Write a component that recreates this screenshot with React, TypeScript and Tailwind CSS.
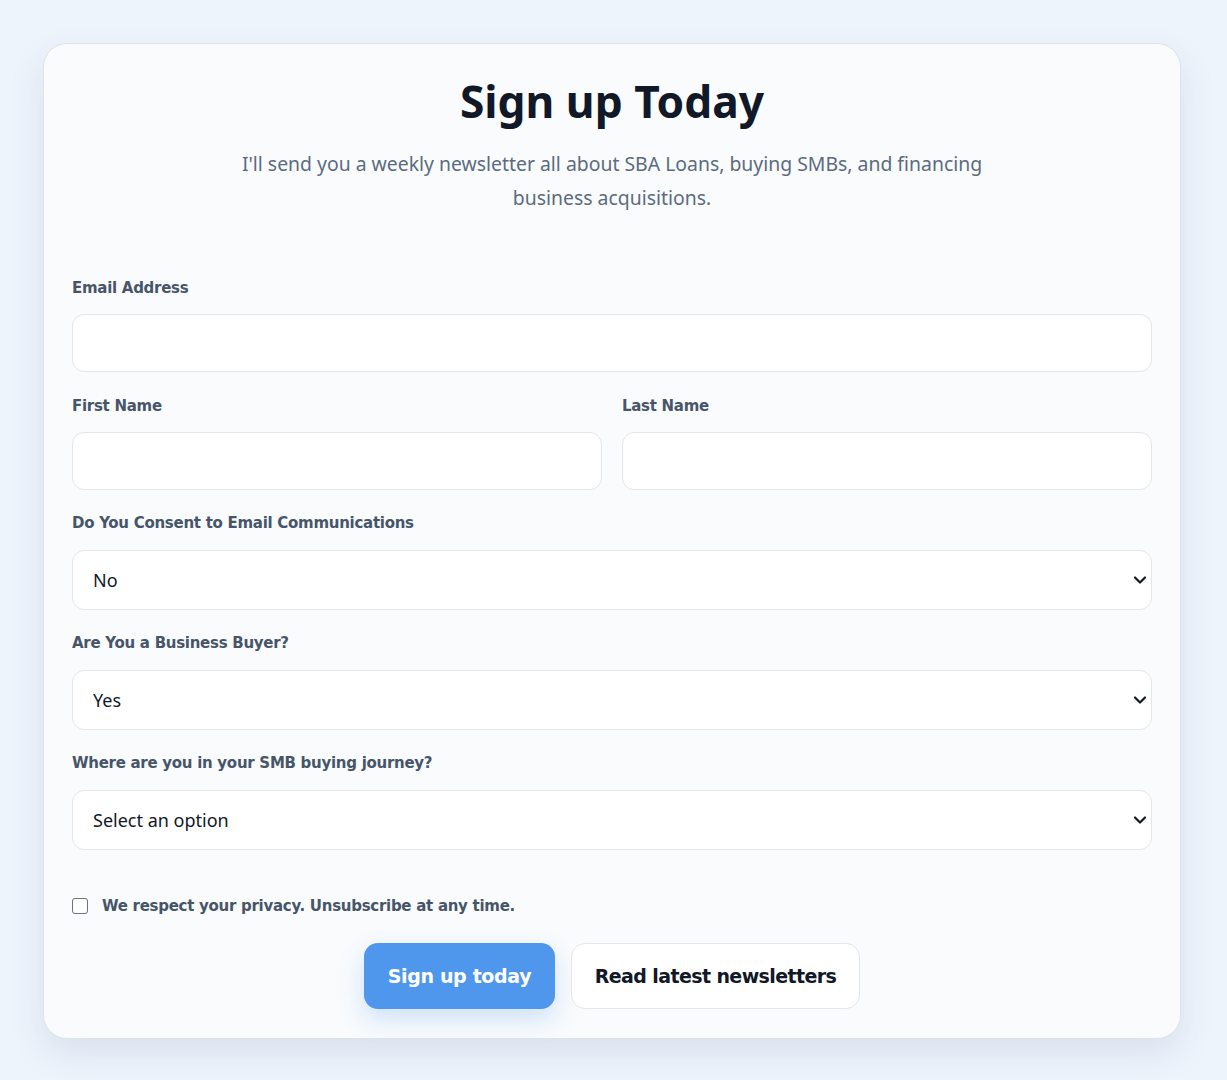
import { ChevronDown } from "lucide-react";

const label = "block text-[15px] leading-[24px] font-bold tracking-[-0.28px] text-[#475569]";
const labelFont = { fontFamily: '"DejaVu Sans", Verdana, sans-serif' };
const field =
  "w-full rounded-[12px] border border-[#e3e6ea] bg-white px-5 text-[18px] text-[#111827] outline-none";

function Select({ value, options }: { value: string; options: string[] }) {
  return (
    <div className="relative">
      <select
        defaultValue={value}
        className={`${field} h-[60px] appearance-none`}
        style={{ fontFamily: '"Noto Sans", sans-serif' }}
      >
        {options.map((o) => (
          <option key={o}>{o}</option>
        ))}
      </select>
      <ChevronDown
        className="pointer-events-none absolute right-[2px] top-1/2 h-[20px] w-[20px] -translate-y-1/2 text-[#111827]"
        strokeWidth={2.6}
      />
    </div>
  );
}

export default function App() {
  return (
    <div className="min-h-screen bg-[#eef4fc] pl-[43px] pt-[43px] pb-[41px]">
      <div
        className="w-[1138px] rounded-[24px] border border-[#dde3ea] bg-[#f9fbfd] px-[28px] pt-[29px] pb-[29px] shadow-[0_14px_36px_rgba(30,60,110,0.10)]"
        style={{ fontFamily: '"Noto Sans", sans-serif' }}
      >
        <h1 className="text-center text-[44.3px] font-bold leading-[56px] text-[#111827]">
          Sign up Today
        </h1>
        <p className="mx-auto mt-[18px] max-w-[770px] text-center text-[19.4px] leading-[34px] text-[#5c6b80]">
          I'll send you a weekly newsletter all about SBA Loans, buying SMBs, and financing
          business acquisitions.
        </p>

        <form className="mt-[61px]">
          <label className={label} style={labelFont}>
            Email Address
          </label>
          <input type="email" className={`${field} mt-[14px] h-[58px]`} />

          <div className="mt-[22px] grid grid-cols-2 gap-[20px]">
            <div>
              <label className={label} style={labelFont}>
                First Name
              </label>
              <input className={`${field} mt-[14px] h-[58px]`} />
            </div>
            <div>
              <label className={label} style={labelFont}>
                Last Name
              </label>
              <input className={`${field} mt-[14px] h-[58px]`} />
            </div>
          </div>

          <div className="mt-[21px]">
            <label className={`${label} mb-[15px]`} style={labelFont}>
              Do You Consent to Email Communications
            </label>
            <Select value="No" options={["No", "Yes"]} />
          </div>

          <div className="mt-[21px]">
            <label className={`${label} mb-[15px]`} style={labelFont}>
              Are You a Business Buyer?
            </label>
            <Select value="Yes" options={["Yes", "No"]} />
          </div>

          <div className="mt-[21px]">
            <label className={`${label} mb-[15px]`} style={labelFont}>
              Where are you in your SMB buying journey?
            </label>
            <Select
              value="Select an option"
              options={["Select an option", "Just exploring", "Actively searching", "Under LOI"]}
            />
          </div>

          <label className="mt-[44px] flex items-center gap-[14px]">
            <input
              type="checkbox"
              className="h-[16px] w-[16px] appearance-none rounded-[3px] border border-[#6b7280] bg-white"
            />
            <span className={label} style={labelFont}>
              We respect your privacy. Unsubscribe at any time.
            </span>
          </label>

          <div className="mt-[25px] flex justify-center gap-[16px]" style={labelFont}>
            <button
              type="button"
              className="h-[66px] w-[191px] rounded-[14px] bg-[#4f97ec] text-[19px] font-bold tracking-[-0.35px] text-white shadow-[0_10px_24px_rgba(79,151,236,0.25)]"
            >
              Sign up today
            </button>
            <button
              type="button"
              className="h-[66px] w-[289px] rounded-[14px] border border-[#e3e6ea] bg-white text-[19px] font-bold tracking-[-0.6px] text-[#111827]"
            >
              Read latest newsletters
            </button>
          </div>
        </form>
      </div>
    </div>
  );
}
